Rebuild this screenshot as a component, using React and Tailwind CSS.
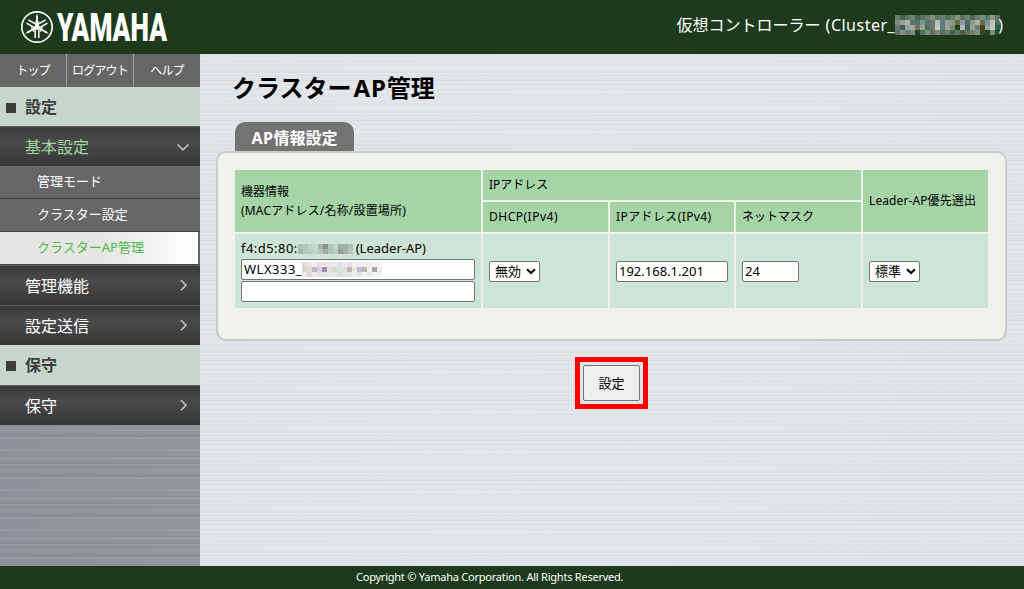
import { useState } from "react";
import clsx from "clsx";

const subItems = ["管理モード", "クラスター設定", "クラスターAP管理"];

// colours of the masked-out characters, one string per row
const clusterMask = [
  ["#6b7d6e", "#47614f", "#5d7363", "#6f8274", "#47614f", "#5c725f", "#6a7b6c", "#84917f", "#5f7566", "#6b7d6e", "#556c5b", "#6b7d6e", "#84917f", "#5c725f", "#70816f", "#4d6551", "#6b7d6e", "#7d8d7b", "#5f7566", "#8a9684", "#5d7363"],
  ["#7d8d7b", "#93a39b", "#aeb8ae", "#5d7363", "#54707a", "#7a9298", "#5f7566", "#6f7477", "#b4c0ba", "#64797b", "#8ba0a4", "#8f9a84", "#6f6d3c", "#8b9ba2", "#4c6b66", "#8c9788", "#a9b4a8", "#676f4a", "#74939a", "#b9c1b8", "#4b6b61"],
  ["#64797b", "#446059", "#8ba0a4", "#a1aa9d", "#7b6f55", "#8fa3a0", "#546b58", "#6f7477", "#c3cbc0", "#64797b", "#97a5a1", "#7a8c70", "#1d4226", "#b5bfb6", "#3f625d", "#93a39b", "#6c7d73", "#4b3e1b", "#94a89f", "#c0c8be", "#315c49"],
  ["#5d7363", "#84917f", "#6b7d6e", "#7d8d7b", "#17452e", "#556c5b", "#7d8d7b", "#5c725f", "#7c8a79", "#5a705f", "#6b7d6e", "#45604c", "#5f7566", "#4e5f39", "#5d7363", "#6f8274", "#84917f", "#4b3e1b", "#17452e", "#7d8d7b", "#17452e"],
];

const macMask = [
  ["#aebfb5", "#afc4ba", "#c0d6ca", "#c5dbd0", "#a5b5ad", "#85918b", "#b1c3ba", "#c0d6ca", "#9fb3a9", "#a1b0aa", "#aec2b8"],
  ["#a3b7ac", "#b6c9bf", "#b9cdc2", "#c3d8cd", "#b1c5ba", "#a0aea7", "#afc4ba", "#b9cdc2", "#8e9f96", "#a3b2a9", "#b5c9be"],
];

const nameMask = [
  ["#dedbdd", "#e9e7e7", "#f1eeee", "#e6e3e7", "#e9e6e0", "#e3e9ed", "#ece9e7", "#e0dfe3", "#efedec", "#e5e2e5", "#efefef", "#ececec", "#f0eff0", "#eeeeee", "#f4f4f4", "#f6f6f6"],
  ["#dcd5d1", "#e6dcda", "#b4bcc8", "#dad3d8", "#9c8fae", "#e4e0e0", "#d8d8c2", "#d4e4e8", "#e4e0e0", "#c1b6b6", "#e8e8e8", "#c6bcc9", "#c3b4b4", "#f0f0ee", "#a4a5ad", "#eeeeee"],
  ["#ece9e7", "#d9d5d9", "#efe9e9", "#e3e2e6", "#e7e2e2", "#e4e8e0", "#ece7e6", "#dcdee2", "#e9e3e7", "#e2e2e2", "#ededed", "#e5e0e3", "#f2f2f2", "#e8e8e8", "#f3f3f3", "#f1f1f1"],
];

function Mosaic({ rows, cell, className }) {
  return (
    <span className={clsx("inline-block shrink-0", className)}>
      {rows.map((row, i) => (
        <span key={i} className="flex">
          {row.map((color, j) => (
            <span key={j} className={cell} style={{ backgroundColor: color }} />
          ))}
        </span>
      ))}
    </span>
  );
}

function Logo() {
  return (
    <svg width="260" height="54" viewBox="0 -9 260 54" className="ml-5">
      <circle cx="17" cy="18" r="15.2" fill="none" stroke="#fff" strokeWidth="1.7" />
      {[0, 120, 240].map((deg) => (
        <g key={deg} transform={`rotate(${deg} 17 18)`} fill="none" stroke="#fff">
          <path d="M17 18V7" strokeWidth="1.8" />
          <path d="M17 4.5l-1.2 4h2.4z" fill="#fff" stroke="none" />
          <path d="M15.2 17V29M18.8 17V29" strokeWidth="1.5" />
          <path d="M14.6 13h4.8" strokeWidth="1.2" />
        </g>
      ))}
      <circle cx="17" cy="18" r="2.4" fill="#fff" />
      <text
        x="37"
        y="32"
        textLength="110"
        lengthAdjust="spacingAndGlyphs"
        className="fill-white font-['Roboto'] text-[39px] font-black"
      >
        YAMAHA
      </text>
    </svg>
  );
}

function Chevron({ open }) {
  return (
    <svg width="12" height="12" viewBox="0 0 12 12" className="mr-[11px]" fill="none" stroke="#d0d0d0" strokeWidth="1.4">
      <path d={open ? "M0.5 3.5L6 8.7L11.5 3.5" : "M4 0.2L9 5.2L4 10.2"} />
    </svg>
  );
}

function SectionTitle({ children, className }) {
  return (
    <div className={clsx("flex items-center bg-[#c7d6cd] pl-1.5 text-base font-bold text-[#3c3c3c]", className)}>
      <span className="mt-0.5 mr-[9px] size-[10px] bg-[#3c3c3c]" />
      {children}
    </div>
  );
}

function MenuItem({ label, open, onClick }) {
  return (
    <button
      onClick={onClick}
      className={clsx(
        "flex h-10 w-full items-center justify-between border-t border-[#5c5c5c] bg-linear-to-b from-[#3b3b3b] via-[#4a4a4a] via-40% to-[#363636] pl-[25px] text-base",
        open ? "text-[#9fd3a3]" : "text-white"
      )}
    >
      {label}
      <Chevron open={open} />
    </button>
  );
}

function Select({ value, options }) {
  return (
    <span className="relative inline-flex">
      <select
        defaultValue={value}
        className="h-[21px] w-[51px] appearance-none rounded-[2px] border border-[#767676] bg-white pl-[5px] text-[13px] leading-none"
      >
        {options.map((o) => (
          <option key={o}>{o}</option>
        ))}
      </select>
      <svg width="10" height="7" viewBox="0 0 10 7" className="pointer-events-none absolute top-[7px] right-1" fill="none" stroke="#000" strokeWidth="2">
        <path d="M1 1.2L5 5L9 1.2" />
      </svg>
    </span>
  );
}

const inputClass = "block h-[21px] rounded-[2px] border border-[#767676] bg-white px-0.5 text-[13px]";
const headClass = "bg-[#a5d4a6] px-1.5 text-left font-normal";
const cellClass = "bg-[#cee4d7] px-1.5";

export default function App() {
  const [open, setOpen] = useState(true);
  const [current, setCurrent] = useState("クラスターAP管理");

  return (
    <div className="flex h-[589px] w-[1024px] flex-col overflow-hidden font-['Noto_Sans','Noto_Sans_CJK_JP',sans-serif] text-black">
      <header className="flex h-[54px] shrink-0 items-center justify-between bg-[#1d3b1c] pr-[21px] text-white">
        <Logo />
        <div className="flex items-center pb-1 text-base whitespace-nowrap">
          <span>仮想コントローラー</span>
          <span className="ml-[5px] tracking-[0.5px]">(Cluster_</span>
          <Mosaic rows={clusterMask} cell="h-[5px] w-[5px]" className="-mr-0.5" />
          <span className="relative">)</span>
        </div>
      </header>

      <div className="flex min-h-0 flex-1">
        <nav className="w-[200px] shrink-0 bg-[repeating-linear-gradient(180deg,transparent_0_3px,#ffffff14_3px_5px,transparent_5px_9px,#00000012_9px_10px,#ffffff18_10px_11px,transparent_11px_16px,#ffffff0c_16px_18px,transparent_18px_20px,#00000008_20px_22px,transparent_22px_24px,#ffffff1c_24px_25px,transparent_25px_30px,#0000000a_30px_31px,transparent_31px_36px,#ffffff20_36px_37px,transparent_37px_40px),repeating-linear-gradient(180deg,transparent_0_2px,#00000008_2px_3px,transparent_3px_5px),linear-gradient(90deg,#8f949a,#92979c)]">
          <div className="flex h-[33px] divide-x divide-[#a0a0a0] bg-[#666] text-xs text-white">
            {["トップ", "ログアウト", "ヘルプ"].map((t) => (
              <a key={t} href="#" className="flex flex-1 items-center justify-center tracking-[-0.8px]">
                {t}
              </a>
            ))}
          </div>
          <SectionTitle className="h-[39px]">設定</SectionTitle>
          <MenuItem label="基本設定" open={open} onClick={() => setOpen(!open)} />
          {open && (
            <ul className="text-[13px]">
              {subItems.map((item) => (
                <li
                  key={item}
                  onClick={() => setCurrent(item)}
                  className={clsx(
                    "flex h-[33px] items-center border-b border-[#454545] pl-[37px]",
                    item === current
                      ? "border-r-2 border-r-[#666] bg-linear-to-r from-[#e5e5e3] from-50% to-white text-[#4db848]"
                      : "bg-[#666] text-white"
                  )}
                >
                  {item}
                </li>
              ))}
            </ul>
          )}
          <MenuItem label="管理機能" />
          <MenuItem label="設定送信" />
          <SectionTitle className="h-10">保守</SectionTitle>
          <MenuItem label="保守" />
        </nav>

        <main className="flex-1 bg-[repeating-linear-gradient(180deg,transparent_0_4px,#ffffff20_4px_6px,transparent_6px_10px,#b0b6be18_10px_11px,transparent_11px_18px,#aab0b82c_18px_19px,#ffffff38_19px_20px,transparent_20px_26px,#aab0b820_26px_27px,transparent_27px_32px,#ffffff50_32px_33px,transparent_33px_37px,#ffffff28_37px_39px,transparent_39px_40px),repeating-linear-gradient(180deg,transparent_0_3px,#ffffff1c_3px_4px,transparent_4px_5px),linear-gradient(100deg,#dfe3e8,#e1e4e7_60%,#dfe2e5)] pl-4">
          <h1 className="mt-[17px] ml-4 h-[34px] text-2xl leading-[34px] font-bold">
            クラスター<span className="ml-0.5 tracking-[0.8px]">AP</span>管理
          </h1>
          <div className="mt-[17px] ml-[19px] flex h-[29px] w-[119px] items-center justify-center rounded-t-[10px] bg-[#737373] pt-0.5 text-base font-bold text-white">
            <span className="tracking-[0.6px]">AP</span>情報設定
          </div>
          <section className="h-[190px] w-[791px] rounded-[10px] border-2 border-[#c9cccd] bg-[#f1f2eb] pt-[17px] pl-[17px]">
            <table className="w-[753px] table-fixed border-collapse text-xs">
              <colgroup>
                <col className="w-[247px]" />
                <col className="w-[127px]" />
                <col className="w-[126px]" />
                <col className="w-[127px]" />
                <col className="w-[126px]" />
              </colgroup>
              <tbody className="[&_td]:border-[#f1f2eb] [&_th]:border-[#f1f2eb]">
                <tr className="h-[31px]">
                  <th rowSpan={2} className={clsx(headClass, "border-r-2 border-b-2 leading-[19px]")}>
                    機器情報
                    <br />
                    <span className="tracking-[0.17px]">(MACアドレス/名称/設置場所)</span>
                  </th>
                  <th colSpan={3} className={clsx(headClass, "border-r-2 border-b-2")}>IPアドレス</th>
                  <th rowSpan={2} className={clsx(headClass, "border-b-2 tracking-[0.1px] whitespace-nowrap")}>Leader-AP優先選出</th>
                </tr>
                <tr className="h-8">
                  <th className={clsx(headClass, "border-r-2 border-b-2 tracking-[0.5px]")}>DHCP(IPv4)</th>
                  <th className={clsx(headClass, "border-r-2 border-b-2 tracking-[0.4px]")}>IPアドレス(IPv4)</th>
                  <th className={clsx(headClass, "border-r-2 border-b-2")}>ネットマスク</th>
                </tr>
                <tr className="h-[75px]">
                  <td className={clsx(cellClass, "border-r-2")}>
                    <div className="flex h-[19px] items-center pb-0.5 text-[13px] whitespace-nowrap">
                      <span className="tracking-[0.45px]">f4:d5:80:</span>
                      <Mosaic rows={macMask} cell="h-[5px] w-[5px]" className="mr-[3px]" />
                      (Leader-AP)
                    </div>
                    <div className={clsx(inputClass, "flex w-[234px] items-center")}>
                      <span className="tracking-[0.5px]">WLX333_</span>
                      <Mosaic rows={nameMask} cell="h-[5px] w-[5px]" />
                    </div>
                    <input className={clsx(inputClass, "mt-px w-[234px]")} />
                  </td>
                  <td className={clsx(cellClass, "border-r-2")}>
                    <Select value="無効" options={["無効", "有効"]} />
                  </td>
                  <td className={clsx(cellClass, "border-r-2")}>
                    <input defaultValue="192.168.1.201" className={clsx(inputClass, "w-28")} />
                  </td>
                  <td className={clsx(cellClass, "border-r-2")}>
                    <input defaultValue="24" className={clsx(inputClass, "w-[57px]")} />
                  </td>
                  <td className={cellClass}>
                    <Select value="標準" options={["標準", "優先"]} />
                  </td>
                </tr>
              </tbody>
            </table>
          </section>
          <div className="mt-4 ml-[359px] flex h-[52px] w-[73px] items-center justify-center border-[5px] border-[#f00]">
            <button className="h-9 w-[57px] rounded-[2px] border border-[#767676] bg-[#efefef] pt-0.5 text-[13px]">設定</button>
          </div>
        </main>
      </div>

      <footer className="flex h-[23px] shrink-0 items-center bg-[#1d3b1c] pl-[356px] text-[11px] tracking-[-0.23px] text-white">
        Copyright © Yamaha Corporation. All Rights Reserved.
      </footer>
    </div>
  );
}
